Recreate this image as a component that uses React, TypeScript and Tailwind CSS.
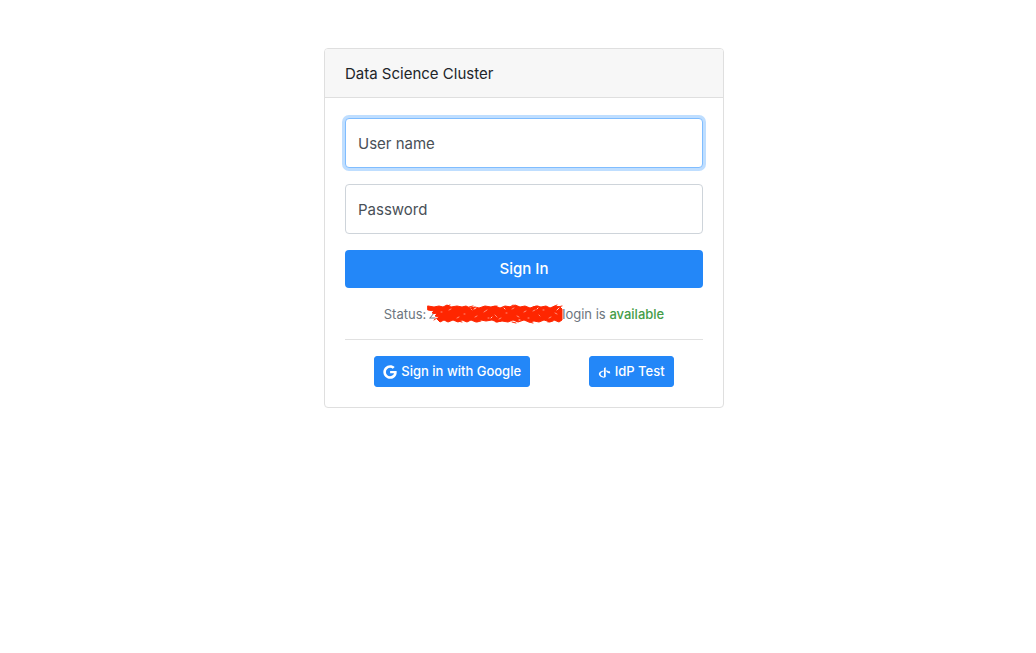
import { FaGoogle, FaOpenid } from "react-icons/fa";

const fieldClass =
  "peer col-start-1 row-start-1 h-[50px] w-full rounded border bg-white px-3 text-[15px] text-[#495057] outline-none";

const fieldLabelClass =
  "pointer-events-none invisible col-start-1 row-start-1 h-[50px] pl-[13px] text-[15px] leading-[52px] text-[#495057] peer-placeholder-shown:visible";

const providerClass =
  "flex h-[31px] items-center justify-center gap-1 whitespace-nowrap rounded-[3px] border border-[#2387f8] bg-[#2387f8] px-2 pt-px text-[13px] font-medium text-white";

function Redaction() {
  return (
    <svg
      width="138"
      height="20"
      viewBox="0 0 138 20"
      className="-mr-0.5 shrink-0"
      aria-hidden="true"
      fill="none"
      strokeLinecap="round"
      strokeLinejoin="round"
    >
      <path d="M4 14h5M4 14l4-5" stroke="#6c757d" strokeWidth="1" />
      <path
        fill="#ff2600"
        stroke="#ff2600"
        strokeWidth="1"
        d="M2 2L8 3L13 2L17 3L21 1L25 3L31 2L36 3L40 2L44 4L49 3L53 4L59 2L65 3L69 2L74 4L79 2L85 3L89 1L94 3L99 2L104 4L110 2L115 3L120 2L124 4L129 2L134 3L136 5L136 16L133 18L128 16L124 18L118 16L113 18L108 17L103 18L98 16L92 18L87 16L82 18L76 17L71 18L66 16L60 17L55 16L50 18L45 16L41 18L36 16L32 18L27 16L22 18L18 16L14 18L11 15L13 13L9 12L11 10L6 9L8 7L2 6Z"
      />
      <path
        stroke="#ff2600"
        strokeWidth="1"
        d="M11 14l-3 2M21 2l3-1M32 17l4 1M43 3l4-1M51 18l4-1M66 3l5-1M70 18l5-1M84 3l3-2M86 18l4 1M107 3l5-1M103 18l4 1M127 3l4-2M122 18l5-1M132 3l4-1"
      />
      <path
        stroke="#ff907c"
        strokeWidth="1"
        d="M15 8h1M23 6l2-1M31 14l2-1M38 10h1M45 5l1 1M49 13l2-1M58 8l3-2M62 14h1M69 11l2 2M73 15l2-1M80 9h1M86 5l2-1M91 12l2 1M98 8l2-1M102 14h1M107 7l2-1M113 11l1 1M117 6h1M123 14l2-1M129 9l2 1"
      />
      <path
        stroke="#ffd4cb"
        strokeWidth="1"
        d="M48 5l2-1M65 14l1-1M78 4l1 1M93 16h1M111 5l1-1M131 6l2-2"
      />
    </svg>
  );
}

export default function App() {
  return (
    <main className="flex min-h-screen items-start justify-center bg-white pt-12 pb-12 pl-3 font-[Inter,'Liberation_Sans',sans-serif] text-[#212529]">
      <section className="w-full max-w-[400px] rounded border border-[#dfdfdf] bg-white">
        <header className="rounded-t-[3px] border-b border-[#dfdfdf] bg-[#f7f7f7] px-5 pt-[13px] pb-[11px]">
          <h1 className="text-[15px] leading-6">Data Science Cluster</h1>
        </header>
        <div className="p-5">
          <form className="flex flex-col gap-4" onSubmit={(e) => e.preventDefault()}>
            <div className="grid">
              <input
                id="username"
                type="text"
                placeholder=" "
                className={`${fieldClass} border-[#80bdff] ring-3 ring-[#bfdeff]`}
              />
              <label htmlFor="username" className={fieldLabelClass}>
                User name
              </label>
            </div>
            <div className="grid">
              <input
                id="password"
                type="password"
                placeholder=" "
                className={`${fieldClass} border-[#ced4da]`}
              />
              <label htmlFor="password" className={fieldLabelClass}>
                Password
              </label>
            </div>
            <button
              type="submit"
              className="h-[38px] w-full rounded bg-[#2387f8] pt-px text-[15px] font-medium text-white"
            >
              Sign In
            </button>
          </form>
          <p className="mt-4 mb-[15px] flex items-center justify-center whitespace-nowrap text-[13px] leading-5 text-[#6c757d]">
            <span>Status:</span>
            <Redaction />
            <span>
              login is <span className="font-medium text-[#449d48]">available</span>
            </span>
          </p>
          <hr className="mb-4 border-[#e1e1e1]" />
          <div className="flex justify-around">
            <button type="button" className={providerClass}>
              <FaGoogle className="size-[14px]" aria-hidden="true" />
              Sign in with Google
            </button>
            <button type="button" className={providerClass}>
              <FaOpenid className="size-[13px]" aria-hidden="true" />
              IdP Test
            </button>
          </div>
        </div>
      </section>
    </main>
  );
}
